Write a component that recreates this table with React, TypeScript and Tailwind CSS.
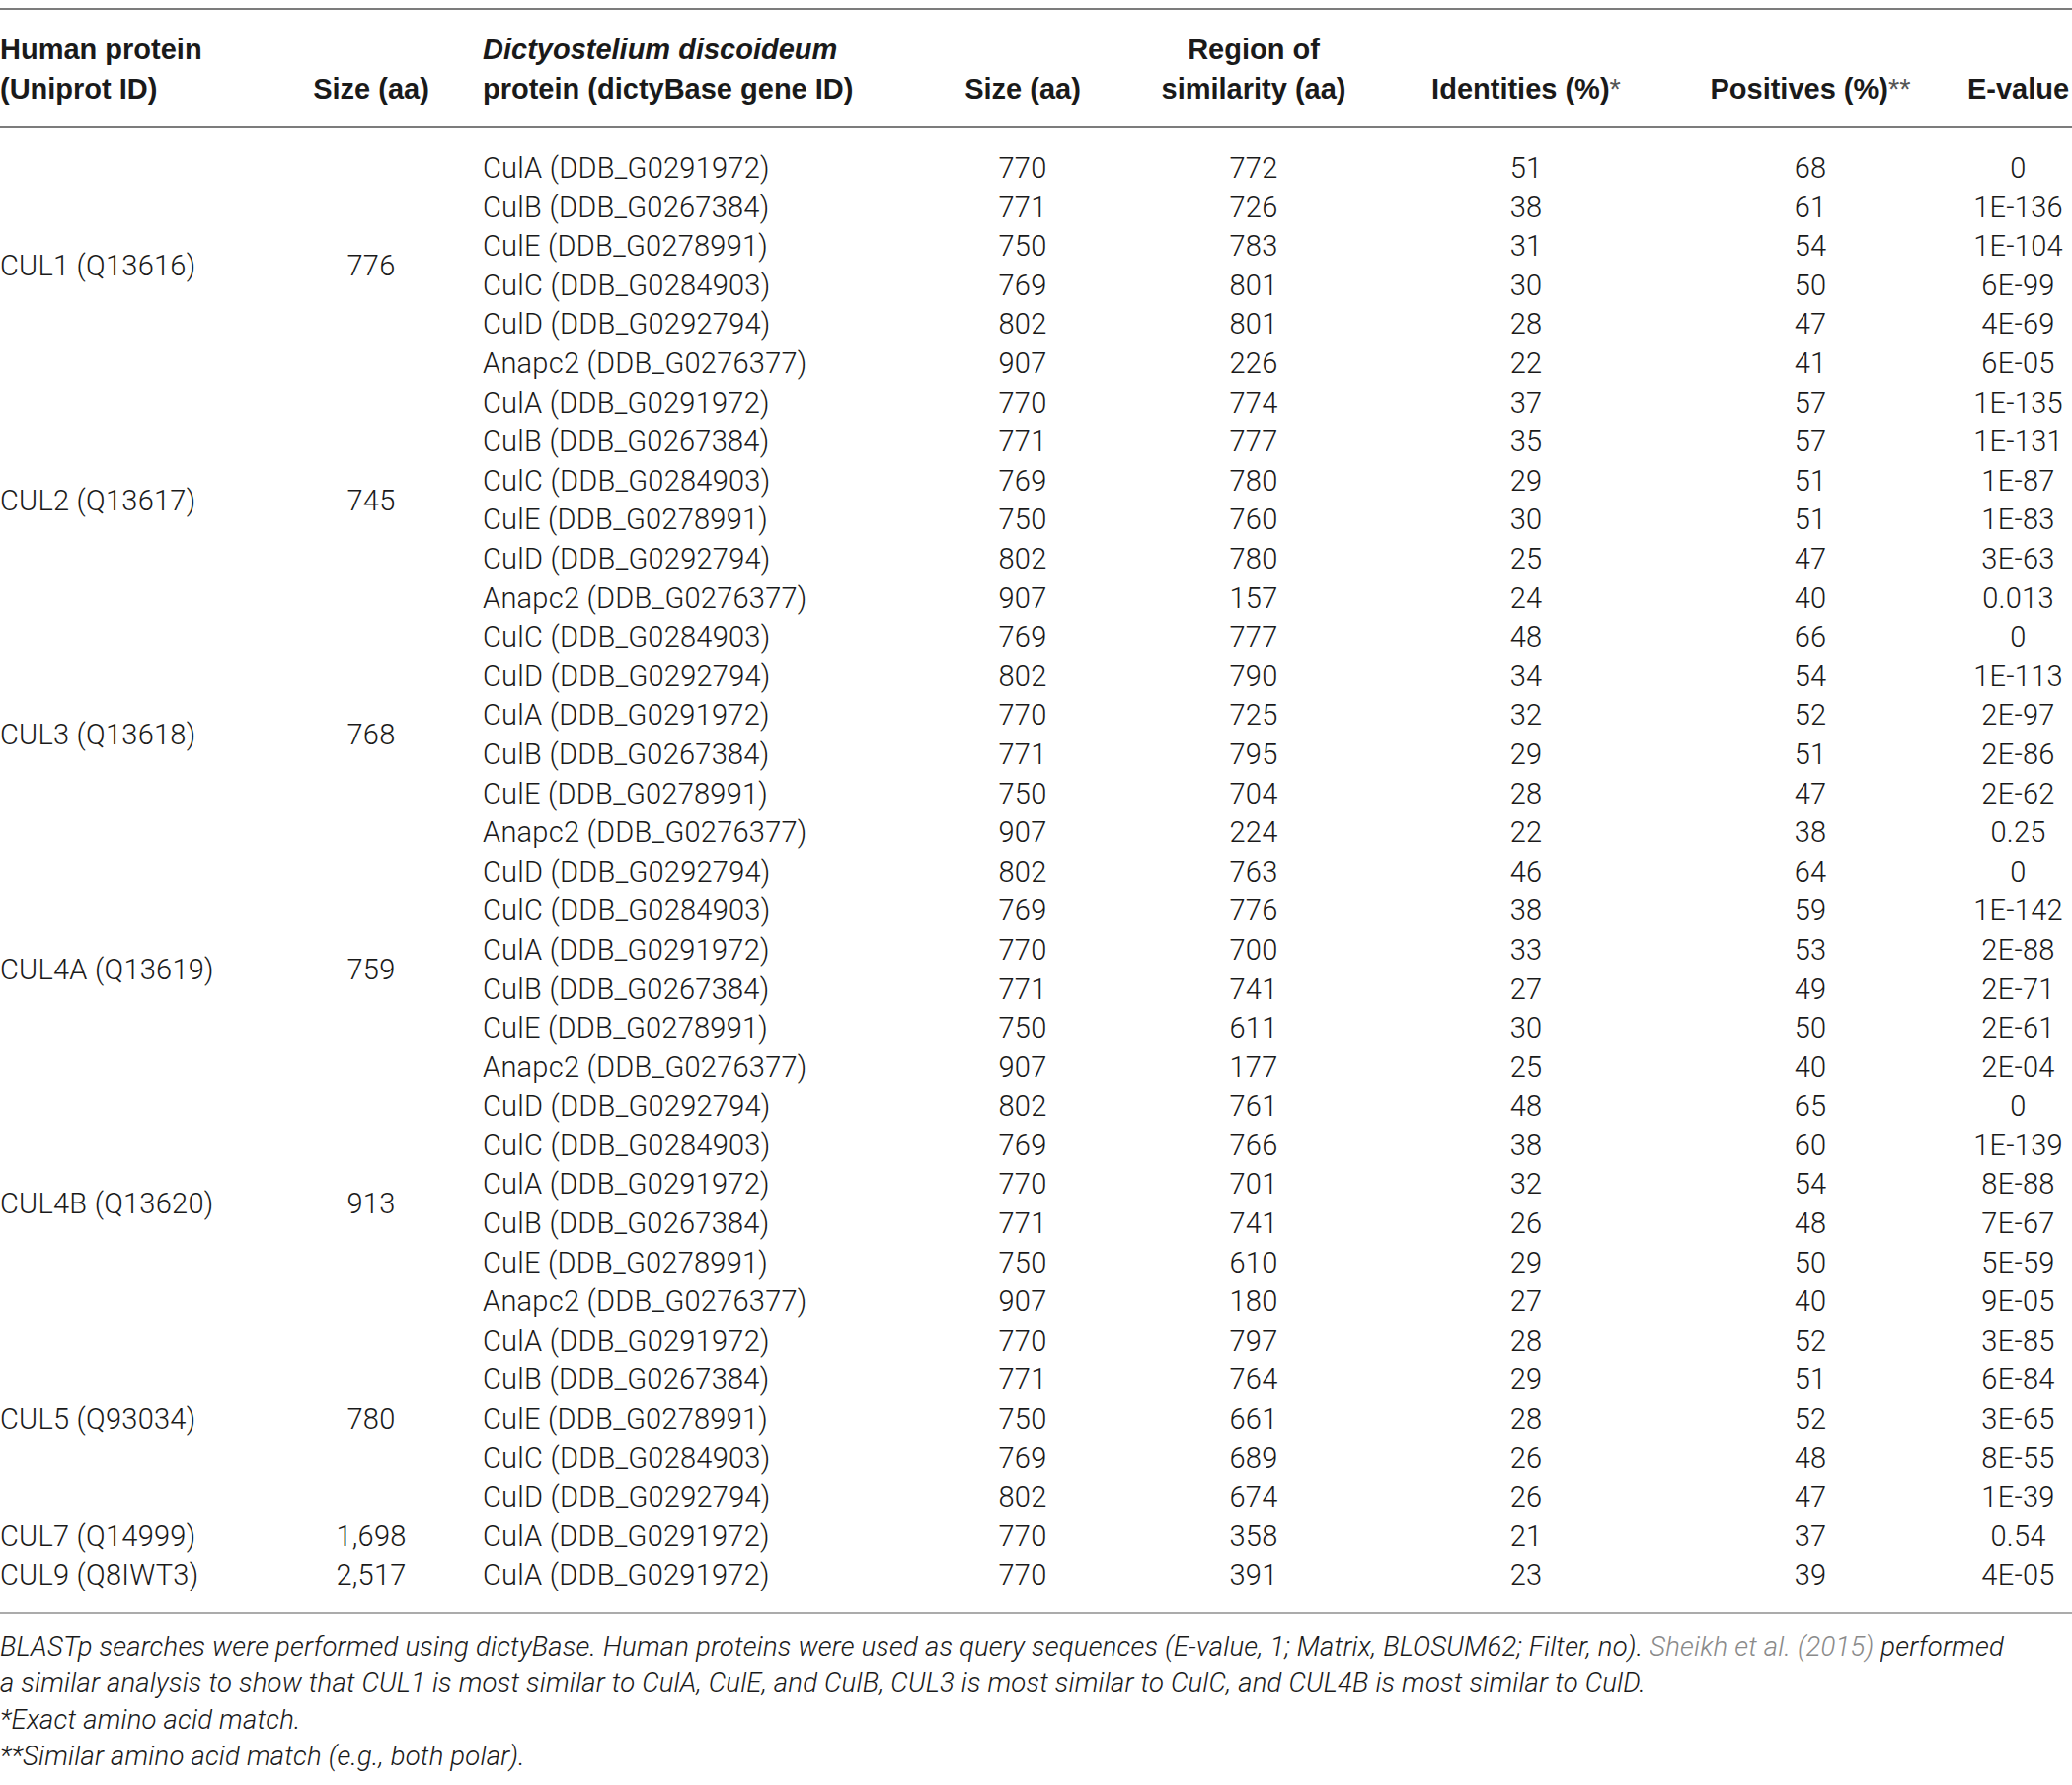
import React from 'react';

type Hit = [string, string, string, string, string, string];

type Group = { name: string; size: string; hits: Hit[] };

const groups: Group[] = [
  {
    name: 'CUL1 (Q13616)',
    size: '776',
    hits: [
      ['CulA (DDB_G0291972)', '770', '772', '51', '68', '0'],
      ['CulB (DDB_G0267384)', '771', '726', '38', '61', '1E-136'],
      ['CulE (DDB_G0278991)', '750', '783', '31', '54', '1E-104'],
      ['CulC (DDB_G0284903)', '769', '801', '30', '50', '6E-99'],
      ['CulD (DDB_G0292794)', '802', '801', '28', '47', '4E-69'],
      ['Anapc2 (DDB_G0276377)', '907', '226', '22', '41', '6E-05'],
    ],
  },
  {
    name: 'CUL2 (Q13617)',
    size: '745',
    hits: [
      ['CulA (DDB_G0291972)', '770', '774', '37', '57', '1E-135'],
      ['CulB (DDB_G0267384)', '771', '777', '35', '57', '1E-131'],
      ['CulC (DDB_G0284903)', '769', '780', '29', '51', '1E-87'],
      ['CulE (DDB_G0278991)', '750', '760', '30', '51', '1E-83'],
      ['CulD (DDB_G0292794)', '802', '780', '25', '47', '3E-63'],
      ['Anapc2 (DDB_G0276377)', '907', '157', '24', '40', '0.013'],
    ],
  },
  {
    name: 'CUL3 (Q13618)',
    size: '768',
    hits: [
      ['CulC (DDB_G0284903)', '769', '777', '48', '66', '0'],
      ['CulD (DDB_G0292794)', '802', '790', '34', '54', '1E-113'],
      ['CulA (DDB_G0291972)', '770', '725', '32', '52', '2E-97'],
      ['CulB (DDB_G0267384)', '771', '795', '29', '51', '2E-86'],
      ['CulE (DDB_G0278991)', '750', '704', '28', '47', '2E-62'],
      ['Anapc2 (DDB_G0276377)', '907', '224', '22', '38', '0.25'],
    ],
  },
  {
    name: 'CUL4A (Q13619)',
    size: '759',
    hits: [
      ['CulD (DDB_G0292794)', '802', '763', '46', '64', '0'],
      ['CulC (DDB_G0284903)', '769', '776', '38', '59', '1E-142'],
      ['CulA (DDB_G0291972)', '770', '700', '33', '53', '2E-88'],
      ['CulB (DDB_G0267384)', '771', '741', '27', '49', '2E-71'],
      ['CulE (DDB_G0278991)', '750', '611', '30', '50', '2E-61'],
      ['Anapc2 (DDB_G0276377)', '907', '177', '25', '40', '2E-04'],
    ],
  },
  {
    name: 'CUL4B (Q13620)',
    size: '913',
    hits: [
      ['CulD (DDB_G0292794)', '802', '761', '48', '65', '0'],
      ['CulC (DDB_G0284903)', '769', '766', '38', '60', '1E-139'],
      ['CulA (DDB_G0291972)', '770', '701', '32', '54', '8E-88'],
      ['CulB (DDB_G0267384)', '771', '741', '26', '48', '7E-67'],
      ['CulE (DDB_G0278991)', '750', '610', '29', '50', '5E-59'],
      ['Anapc2 (DDB_G0276377)', '907', '180', '27', '40', '9E-05'],
    ],
  },
  {
    name: 'CUL5 (Q93034)',
    size: '780',
    hits: [
      ['CulA (DDB_G0291972)', '770', '797', '28', '52', '3E-85'],
      ['CulB (DDB_G0267384)', '771', '764', '29', '51', '6E-84'],
      ['CulE (DDB_G0278991)', '750', '661', '28', '52', '3E-65'],
      ['CulC (DDB_G0284903)', '769', '689', '26', '48', '8E-55'],
      ['CulD (DDB_G0292794)', '802', '674', '26', '47', '1E-39'],
    ],
  },
  {
    name: 'CUL7 (Q14999)',
    size: '1,698',
    hits: [['CulA (DDB_G0291972)', '770', '358', '21', '37', '0.54']],
  },
  {
    name: 'CUL9 (Q8IWT3)',
    size: '2,517',
    hits: [['CulA (DDB_G0291972)', '770', '391', '23', '39', '4E-05']],
  },
];

const spans: Record<number, string> = {
  1: 'row-span-1',
  5: 'row-span-5',
  6: 'row-span-6',
};

const cols = 'grid grid-cols-[290px_172px_484px_180px_288px_264px_312px_109px]';

export default function App() {
  return (
    <div className="w-[2099px] overflow-hidden bg-white pt-2 text-[#1a1a1a] font-['Roboto','Liberation_Sans',sans-serif]">
      {/* Header */}
      <div className={`${cols} border-y-2 border-[#7c7c7c] pt-5 pb-[18px] text-[29px] leading-[40px] font-bold font-['Liberation_Sans',sans-serif]`}>
        <div className="flex flex-col justify-end whitespace-nowrap">
          <span>Human protein</span>
          <span>(Uniprot ID)</span>
        </div>
        <div className="flex items-end justify-center whitespace-nowrap">Size (aa)</div>
        <div className="flex flex-col justify-end pl-[27px] whitespace-nowrap">
          <span className="italic">Dictyostelium discoideum</span>
          <span>protein (dictyBase gene ID)</span>
        </div>
        <div className="flex items-end justify-center whitespace-nowrap">Size (aa)</div>
        <div className="flex flex-col items-center justify-end whitespace-nowrap">
          <span>Region of</span>
          <span>similarity (aa)</span>
        </div>
        <div className="flex items-end justify-center whitespace-nowrap">
          Identities (%)<span className="font-light text-[#555]">*</span>
        </div>
        <div className="flex items-end justify-center whitespace-nowrap">
          Positives (%)<span className="font-light text-[#555]">**</span>
        </div>
        <div className="flex items-end justify-center whitespace-nowrap">E-value</div>
      </div>

      {/* Body */}
      <div className={`${cols} auto-rows-[39.6px] pt-[21px] pb-[17px] text-[29px] tracking-[0.25px] font-light`}>
        {groups.map((g) =>
          g.hits.map((h, i) => (
            <React.Fragment key={g.name + i}>
              {i === 0 && (
                <>
                  <div className={`${spans[g.hits.length]} col-start-1 flex items-center whitespace-nowrap`}>{g.name}</div>
                  <div className={`${spans[g.hits.length]} col-start-2 flex items-center justify-center`}>{g.size}</div>
                </>
              )}
              <div className="col-start-3 flex items-center pl-[27px] whitespace-nowrap">{h[0]}</div>
              <div className="flex items-center justify-center">{h[1]}</div>
              <div className="flex items-center justify-center">{h[2]}</div>
              <div className="flex items-center justify-center">{h[3]}</div>
              <div className="flex items-center justify-center">{h[4]}</div>
              <div className="flex items-center justify-center whitespace-nowrap">{h[5]}</div>
            </React.Fragment>
          ))
        )}
      </div>

      {/* Footnotes */}
      <div className="border-t-2 border-[#ababab] pt-[14px] text-[27.5px] leading-[37px] tracking-[0.2px] italic font-light whitespace-nowrap">
        <p>
          BLASTp searches were performed using dictyBase. Human proteins were used as query sequences (E-value, 1; Matrix, BLOSUM62; Filter, no).{' '}
          <span className="text-[#8a8a8a]">Sheikh et al. (2015)</span> performed
          <br />
          a similar analysis to show that CUL1 is most similar to CulA, CulE, and CulB, CUL3 is most similar to CulC, and CUL4B is most similar to CulD.
        </p>
        <p>*Exact amino acid match.</p>
        <p>**Similar amino acid match (e.g., both polar).</p>
      </div>
    </div>
  );
}
